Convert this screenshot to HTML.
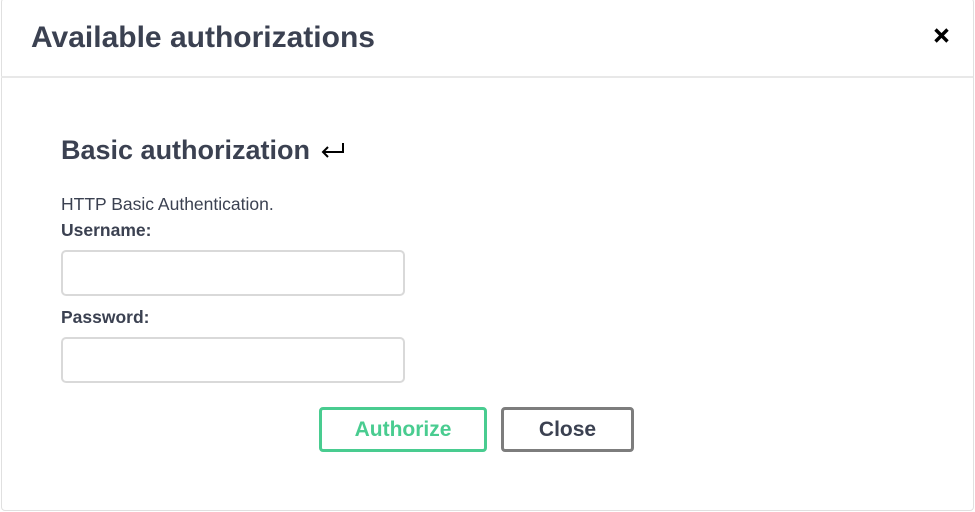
<!DOCTYPE html>
<html><head><style>
body{margin:0;width:975px;height:512px;background:#fff;font-family:"Liberation Sans",sans-serif;color:#3b4151;position:relative;overflow:hidden}
.frame{position:absolute;left:1px;top:-2px;width:971px;height:511px;border:1px solid #e0e0e0;border-radius:4px}
.hr{position:absolute;left:1px;top:76px;width:972px;height:2px;background:#e8e8e8}
.t{position:absolute;white-space:nowrap}
.in{position:absolute;left:61px;width:344px;height:46px;border:2px solid #d9d9d9;border-radius:5px;box-sizing:border-box}
.btn{position:absolute;top:407px;height:45px;box-sizing:border-box;border-radius:4px;font-weight:bold;font-size:21px;text-align:center;line-height:39px}
</style></head><body>
<div class="frame"></div>
<div class="t" style="left:31px;top:21px;font-size:30px;font-weight:bold">Available authorizations</div>
<svg class="t" style="left:933px;top:27px" width="17" height="17" viewBox="0 0 17 17"><path d="M2.5 2.5L14.5 14.5M14.5 2.5L2.5 14.5" stroke="#000" stroke-width="3.4"/></svg>
<div class="hr"></div>
<div class="t" style="left:61px;top:135px;font-size:27px;font-weight:bold">Basic authorization</div>
<svg class="t" style="left:320px;top:141px" width="26" height="18" viewBox="0 0 26 18"><path d="M23 2V11H3M8 6L3 11L8 16" stroke="#000" stroke-width="2" fill="none"/></svg>
<div class="t" style="left:61px;top:194px;font-size:17.5px">HTTP Basic Authentication.</div>
<div class="t" style="left:61px;top:220px;font-size:17.5px;font-weight:bold">Username:</div>
<div class="in" style="top:250px"></div>
<div class="t" style="left:61px;top:307px;font-size:17.5px;font-weight:bold">Password:</div>
<div class="in" style="top:337px"></div>
<div class="btn" style="left:319px;width:168px;border:3px solid #49cc90;color:#49cc90">Authorize</div>
<div class="btn" style="left:501px;width:133px;border:3px solid #7d7d7d;color:#3b4151">Close</div>
</body></html>
